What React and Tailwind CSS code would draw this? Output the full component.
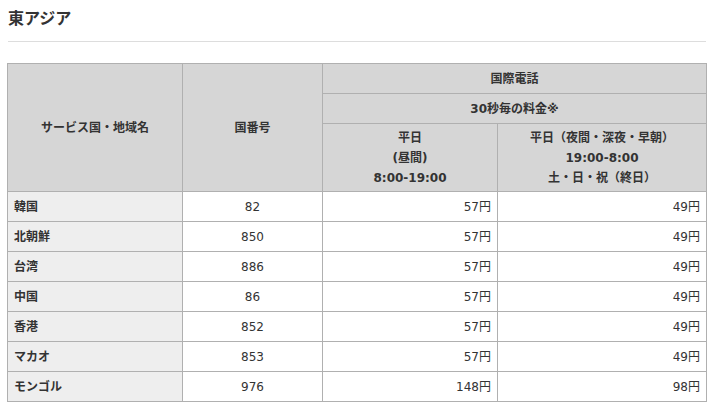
import React from 'react';

const rows = [
  { name: '韓国', code: '82', day: '57円', night: '49円' },
  { name: '北朝鮮', code: '850', day: '57円', night: '49円' },
  { name: '台湾', code: '886', day: '57円', night: '49円' },
  { name: '中国', code: '86', day: '57円', night: '49円' },
  { name: '香港', code: '852', day: '57円', night: '49円' },
  { name: 'マカオ', code: '853', day: '57円', night: '49円' },
  { name: 'モンゴル', code: '976', day: '148円', night: '98円' },
];

const th = 'border border-[#b0b0b0] bg-[#d6d6d6] font-bold text-center align-middle';
const td = 'border border-[#b0b0b0] h-[30px] px-[6px] align-middle';

const App = () => {
  return (
    <div
      className="bg-white text-[#333] px-[7px] pt-[8px] pb-[9px] w-[714px]"
      style={{ fontFamily: '"DejaVu Sans", "Noto Sans CJK JP", sans-serif' }}
    >
      <h2 className="text-[16px] font-bold leading-[22px] pl-[1px]">東アジア</h2>
      <div className="mt-[11px] ml-[1px] w-[698px] border-t border-[#dddddd]" />

      <table className="mt-[21px] w-[699px] border-collapse text-[12px] leading-[20px] table-fixed">
        <colgroup>
          <col className="w-[175px]" />
          <col className="w-[140px]" />
          <col className="w-[175px]" />
          <col className="w-[209px]" />
        </colgroup>
        <thead>
          <tr>
            <th rowSpan={3} className={th}>サービス国・地域名</th>
            <th rowSpan={3} className={th}>国番号</th>
            <th colSpan={2} className={`${th} h-[30px]`}>国際電話</th>
          </tr>
          <tr>
            <th colSpan={2} className={`${th} h-[30px]`}>30秒毎の料金※</th>
          </tr>
          <tr>
            <th className={`${th} h-[68px]`}>
              平日<br />(昼間)<br />8:00-19:00
            </th>
            <th className={`${th} h-[68px]`}>
              平日（夜間・深夜・早朝）<br />19:00-8:00<br />土・日・祝（終日）
            </th>
          </tr>
        </thead>
        <tbody>
          {rows.map((r) => (
            <tr key={r.name}>
              <td className={`${td} bg-[#eeeeee] font-bold text-left`}>{r.name}</td>
              <td className={`${td} text-center`}>{r.code}</td>
              <td className={`${td} text-right`}>{r.day}</td>
              <td className={`${td} text-right`}>{r.night}</td>
            </tr>
          ))}
        </tbody>
      </table>
    </div>
  );
};

export default App;
